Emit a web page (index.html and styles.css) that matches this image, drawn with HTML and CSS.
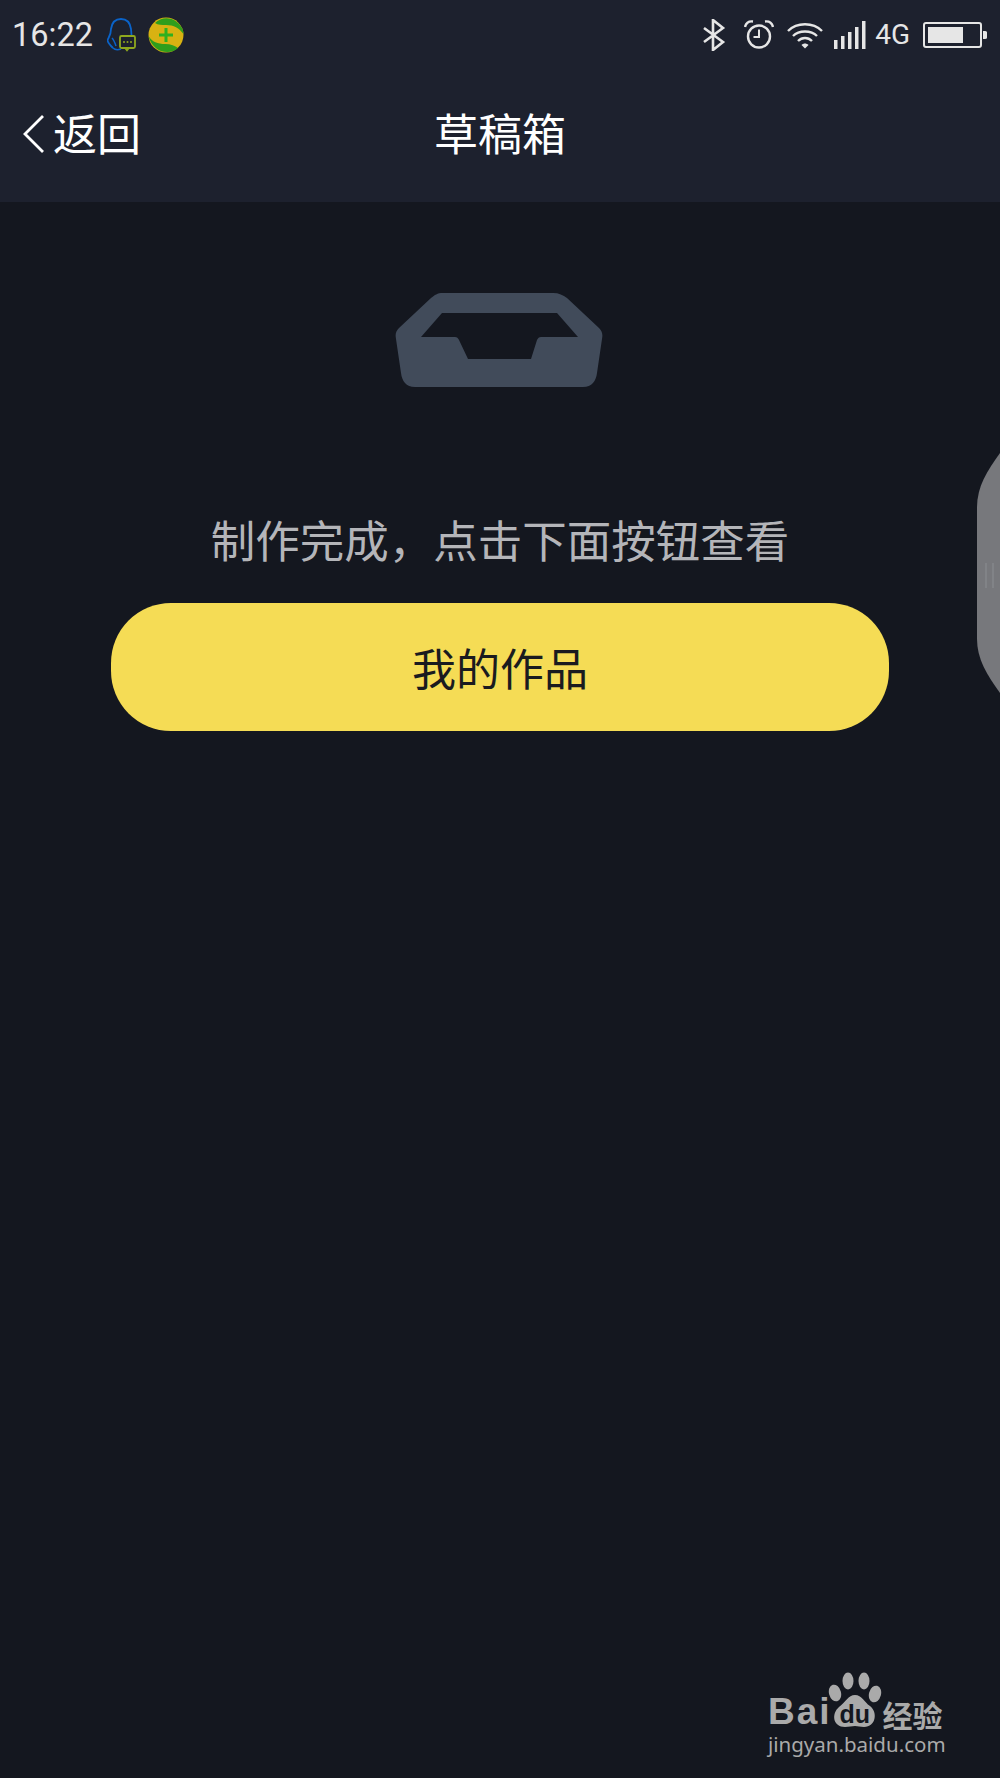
FILE: index.html
```html
<!DOCTYPE html>
<html lang="zh-CN">
<head>
    <meta charset="UTF-8">
    <title>草稿箱</title>
    <link rel="stylesheet" href="styles.css">
</head>
<body>
    <div class="page">
        <header class="top">
            <div class="status-bar">
                <span class="time">16:22</span>
                <svg class="qq-icon" width="30" height="34" viewBox="0 0 30 34">
                    <path d="M6 30 C3 27 0.500 24 0.500 22 C2 19 4 17 4 11 C5 4 9 1 14 1 C19 1 23 4 24 11 L24.500 17" fill="none" stroke="#0a63c9" stroke-width="1.800"/>
                    <path d="M6 30 C8 32 11 32 14 31 M5 20 C7 22 8 25 9 28" fill="none" stroke="#0a63c9" stroke-width="1.500"/>
                    <rect x="13" y="18" width="15" height="12" rx="1.500" fill="#1d212e" stroke="#8fa81e" stroke-width="1.800"/>
                    <path d="M18 30 L20 32.500 L22 30" fill="none" stroke="#8fa81e" stroke-width="1.500"/>
                    <circle cx="17" cy="24" r="1" fill="#8fa81e"/>
                    <circle cx="20.500" cy="24" r="1" fill="#8fa81e"/>
                    <circle cx="24" cy="24" r="1" fill="#8fa81e"/>
                </svg>
                <svg class="guard-icon" width="36" height="36" viewBox="0 0 36 36">
                    <circle cx="18" cy="18" r="17.500" fill="#d8b212"/>
                    <path d="M7 6 C14 -1 27 -1 34 11 C35 13 35.500 15 35.500 17 C31 11 26 8 18 8 C14 8 10 8 7 6 Z" fill="#2f9e1c"/>
                    <path d="M0.500 19 C4 25 10 27 17 27 C23 27 27 29 30 31 C23 38 5 37 0.500 19 Z" fill="#2f9e1c"/>
                    <path d="M18 11 V25 M11 18 H25" stroke="#2fb01f" stroke-width="3" fill="none"/>
                </svg>
                <div class="status-right">
                    <svg width="24" height="32" viewBox="0 0 24 32">
                        <path d="M2 9 L21 23 L11 31 V1 L21 9 L2 23" fill="none" stroke="#e6e6e6" stroke-width="2.600"/>
                    </svg>
                    <svg class="alarm" width="30" height="30" viewBox="0 0 30 30">
                        <circle cx="15" cy="16.500" r="11" fill="none" stroke="#e6e6e6" stroke-width="2.400"/>
                        <path d="M15 9.500 V17 H9.500" fill="none" stroke="#e6e6e6" stroke-width="2"/>
                        <path d="M1 7 C2 3 5 1 9 1.500 M29 7 C28 3 25 1 21 1.500" fill="none" stroke="#e6e6e6" stroke-width="2.400"/>
                    </svg>
                    <svg class="wifi" width="36" height="28" viewBox="0 0 36 28">
                        <path d="M1 10 C10 1 26 1 35 10 M6 15 C12 9 24 9 30 15 M11 20 C15 16 21 16 25 20" fill="none" stroke="#e6e6e6" stroke-width="2.400"/>
                        <path d="M14.500 24 C16.500 22 19.500 22 21.500 24 L18 27.500 Z" fill="#e6e6e6"/>
                    </svg>
                    <svg class="signal" width="32" height="28" viewBox="0 0 32 28">
                        <rect x="0" y="19" width="3.500" height="9" fill="#e6e6e6"/>
                        <rect x="7" y="15" width="3.500" height="13" fill="#e6e6e6"/>
                        <rect x="14" y="11" width="3.500" height="17" fill="#e6e6e6"/>
                        <rect x="21" y="6" width="3.500" height="22" fill="#e6e6e6"/>
                        <rect x="28" y="0" width="3.500" height="28" fill="#e6e6e6"/>
                    </svg>
                    <span class="net">4G</span>
                    <svg class="battery" width="65" height="26" viewBox="0 0 65 26">
                        <rect x="1" y="1" width="57" height="24" rx="2" fill="none" stroke="#e6e6e6" stroke-width="2"/>
                        <rect x="5" y="5" width="35" height="16" fill="#e6e6e6"/>
                        <path d="M60 9 H62 C64 9 64 10 64 11 V15 C64 16 64 17 62 17 H60 Z" fill="#e6e6e6"/>
                    </svg>
                </div>
            </div>
            <nav class="nav-bar">
                <a class="back">
                    <svg class="back-arrow" width="24" height="40" viewBox="0 0 24 40">
                        <path d="M21 2 L3 20 L21 38" fill="none" stroke="#fff" stroke-width="2.800"/>
                    </svg>
                    <span>返回</span>
                </a>
                <h1 class="title">草稿箱</h1>
            </nav>
        </header>

        <main class="content">
            <svg class="tray" width="208" height="94" viewBox="0 0 208 94">
                <path fill-rule="evenodd" fill="#414b5a" d="M48 0 H158 C164 0 168 2 172 5 L204 35 C207 38 208 41 207 46 L202 80 C201 88 197 94 188 94 H20 C11 94 7 88 6 80 L1 46 C0 41 1 38 4 35 L36 5 C40 2 42 0 48 0 Z M47 20 L26 44 H60 C62 44 63 45 64 47 L73 66 H136 L142 47 C143 45 144 44 146 44 H183 L162 20 Z"/>
            </svg>
            <p class="message">制作完成，点击下面按钮查看</p>
            <button class="works-btn">我的作品</button>
        </main>

        <!-- 右侧悬浮条 -->
        <svg class="side-handle" width="23" height="240" viewBox="0 0 23 240">
            <path d="M23 0 C10 18 0 34 0 54 V186 C0 206 10 222 23 240 Z" fill="#77787c"/>
            <path d="M9 110 V135 M16 110 V135" stroke="#85868a" stroke-width="1.500"/>
        </svg>

        <!-- 水印 -->
        <div class="watermark">
            <div class="wm-logo">
                <span class="wm-bai">Bai</span>
                <span class="wm-paw">
                    <svg width="54" height="56" viewBox="0 0 54 56">
                        <ellipse cx="7" cy="21" rx="6" ry="8.500" transform="rotate(-15 7 21)" fill="#aaa"/>
                        <ellipse cx="20" cy="9" rx="5.500" ry="8.500" fill="#aaa"/>
                        <ellipse cx="36" cy="9" rx="5.500" ry="8.500" fill="#aaa"/>
                        <ellipse cx="47" cy="22" rx="6" ry="8.500" transform="rotate(15 47 22)" fill="#aaa"/>
                        <path d="M27 23 C34 23 36 30 42 34 C50 40 48 55 36 55 C32 55 30 54 27 54 C24 54 21 55 17 55 C5 55 3 42 11 35 C18 30 20 23 27 23 Z" fill="#aaa"/>
                    </svg>
                    <span class="wm-du">du</span>
                </span>
                <span class="wm-cn">经验</span>
            </div>
            <div class="wm-url">jingyan.baidu.com</div>
        </div>
    </div>
</body>
</html>
```

FILE: styles.css
```css
body {
    margin: 0;
    font-family: "Noto Sans CJK SC", "Noto Sans", sans-serif;
    background-color: #14171f;
    color: #fff;
}
.page {
    position: relative;
    width: 1000px;
    height: 1778px;
    overflow: hidden;
    background-color: #14171f;
}
.top {
    background-color: #1d212e;
}
.status-bar {
    display: flex;
    align-items: center;
    height: 66px;
    padding: 4px 12px 0;
    box-sizing: border-box;
}
.time {
    font-family: Roboto, sans-serif;
    font-size: 32.5px;
    line-height: 40px;
    color: #e6e6e6;
    margin-right: 14px;
}
.guard-icon {
    margin-left: 11px;
}
.status-right {
    display: flex;
    align-items: center;
    margin-left: auto;
}
.alarm {
    margin-left: 18px;
}
.wifi {
    margin-left: 13px;
}
.signal {
    margin-left: 11px;
}
.net {
    font-family: Roboto, sans-serif;
    font-size: 28px;
    line-height: 32px;
    color: #e6e6e6;
    margin-left: 9px;
}
.battery {
    margin-left: 13px;
}
.nav-bar {
    display: grid;
    grid-template-columns: 1fr auto 1fr;
    align-items: center;
    height: 136px;
    padding: 0 22px 4px;
    box-sizing: border-box;
}
.back {
    display: flex;
    align-items: center;
    font-size: 44px;
    line-height: 60px;
    color: #fff;
    gap: 7px;
}
.back-arrow {
    margin-top: 3px;
}
.title {
    margin: 0;
    font-size: 44px;
    line-height: 60px;
    font-weight: 400;
    color: #fff;
}
.content {
    display: flex;
    flex-direction: column;
    align-items: center;
    padding-top: 91px;
}
.tray {
    margin-right: 2px;
}
.message {
    margin: 122px 0 34px;
    font-size: 44.5px;
    line-height: 60px;
    color: #b4b5b9;
}
.works-btn {
    width: 778px;
    height: 128px;
    padding: 0;
    border: none;
    border-radius: 60px;
    background-color: #f5dc55;
    font-family: inherit;
    font-size: 44px;
    color: #1a1b1f;
}
.side-handle {
    position: absolute;
    top: 453px;
    right: 0;
}
.watermark {
    position: absolute;
    left: 768px;
    top: 1672px;
    width: 180px;
    color: #aaa;
}
.wm-logo {
    display: flex;
    align-items: flex-end;
    height: 56px;
}
.wm-bai {
    font-family: "Liberation Sans", sans-serif;
    font-weight: 700;
    font-size: 37px;
    line-height: 40px;
    letter-spacing: 2px;
    margin-bottom: -4px;
}
.wm-paw {
    position: relative;
    display: block;
    flex: none;
    width: 54px;
    height: 56px;
    margin-left: -4px;
}
.wm-du {
    position: absolute;
    left: 12px;
    top: 30px;
    font-family: "Liberation Sans", sans-serif;
    font-weight: 700;
    font-size: 25px;
    line-height: 24px;
    color: #14171f;
}
.wm-cn {
    font-size: 30px;
    line-height: 36px;
    font-weight: 700;
    margin-left: 1px;
    margin-bottom: -4px;
    white-space: nowrap;
}
.wm-url {
    font-family: "Noto Sans", sans-serif;
    font-size: 20.5px;
    line-height: 30px;
    margin-top: 1px;
    white-space: nowrap;
}
```
